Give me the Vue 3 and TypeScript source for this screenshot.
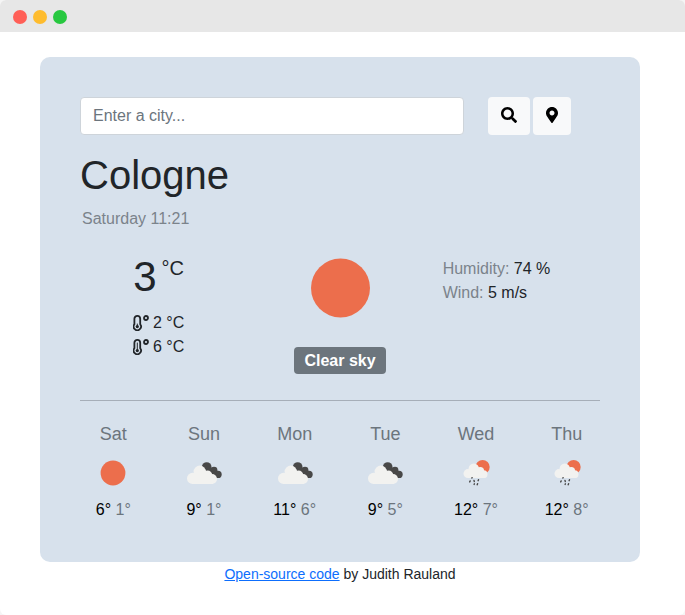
<script setup lang="ts">
import { ref } from 'vue'

type Icon = 'sun' | 'clouds' | 'rain'

interface Day {
  name: string
  icon: Icon
  max: number
  min: number
}

const city = ref('')

const days: Day[] = [
  { name: 'Sat', icon: 'sun', max: 6, min: 1 },
  { name: 'Sun', icon: 'clouds', max: 9, min: 1 },
  { name: 'Mon', icon: 'clouds', max: 11, min: 6 },
  { name: 'Tue', icon: 'clouds', max: 9, min: 5 },
  { name: 'Wed', icon: 'rain', max: 12, min: 7 },
  { name: 'Thu', icon: 'rain', max: 12, min: 8 },
]
</script>

<template>
  <div class="window">
    <header class="titlebar">
      <span class="dot close"></span>
      <span class="dot minimize"></span>
      <span class="dot expand"></span>
    </header>
    <div class="page">
      <main class="card">
        <form class="search" @submit.prevent>
          <input v-model="city" type="text" placeholder="Enter a city..." aria-label="City" autocomplete="off" />
          <div class="actions">
            <button type="submit" aria-label="Search">
              <svg class="glyph" viewBox="0 0 512 512" width="16" height="16"><path d="M505 442.7L405.3 343c-4.5-4.5-10.6-7-17-7H372c27.6-35.3 44-79.7 44-128C416 93.1 322.9 0 208 0S0 93.1 0 208s93.1 208 208 208c48.3 0 92.7-16.4 128-44v16.3c0 6.4 2.5 12.5 7 17l99.7 99.7c9.4 9.4 24.6 9.4 33.9 0l28.3-28.3c9.4-9.4 9.4-24.6.1-34zM208 336c-70.7 0-128-57.2-128-128 0-70.7 57.2-128 128-128 70.7 0 128 57.2 128 128 0 70.7-57.2 128-128 128z" /></svg>
            </button>
            <button type="button" aria-label="Use current location">
              <svg class="glyph" viewBox="0 0 384 512" width="12" height="16"><path d="M172.268 501.67C26.97 291.031 0 269.413 0 192 0 85.961 85.961 0 192 0s192 85.961 192 192c0 77.413-26.97 99.031-172.268 309.67-9.535 13.774-29.93 13.773-39.464 0zM192 272c44.183 0 80-35.817 80-80s-35.817-80-80-80-80 35.817-80 80 35.817 80 80 80z" /></svg>
            </button>
          </div>
        </form>

        <h1>Cologne</h1>
        <p class="date">Saturday 11:21</p>

        <section class="current">
          <div class="temperature">
            <div class="now"><span class="degrees">3</span><span class="unit">°C</span></div>
            <div class="range">
              <svg class="thermometer" viewBox="0 0 16 16" width="16" height="16" aria-hidden="true">
                <path d="M1.4 3.8a2.9 2.9 0 0 1 5.8 0v5.4a3.7 3.7 0 1 1-5.8 0z" stroke-width="1.8" />
                <circle cx="13" cy="3" r="2" stroke-width="1.8" />
                <circle class="bulb" cx="4.3" cy="11.6" r="1.6" />
                <path d="M4.3 9v2" stroke-width="1" />
              </svg>
              <span>2 °C</span>
            </div>
            <div class="range">
              <svg class="thermometer" viewBox="0 0 16 16" width="16" height="16" aria-hidden="true">
                <path d="M1.4 3.8a2.9 2.9 0 0 1 5.8 0v5.4a3.7 3.7 0 1 1-5.8 0z" stroke-width="1.8" />
                <circle cx="13" cy="3" r="2" stroke-width="1.8" />
                <circle class="bulb" cx="4.3" cy="11.6" r="1.6" />
                <path d="M4.3 4v7" stroke-width="1" />
              </svg>
              <span>6 °C</span>
            </div>
          </div>
          <div class="sky">
            <svg viewBox="0 0 100 100" width="100" height="100" aria-hidden="true"><circle cx="50.5" cy="50" r="29.5" fill="#ec6e4c" /></svg>
            <strong class="badge">Clear sky</strong>
          </div>
          <ul class="details">
            <li>Humidity: <span>74 %</span></li>
            <li>Wind: <span>5 m/s</span></li>
          </ul>
        </section>

        <hr />

        <section class="forecast">
          <div v-for="day in days" :key="day.name" class="day">
            <div class="name">{{ day.name }}</div>
            <svg viewBox="0 0 42 42" width="42" height="42" aria-hidden="true">
              <circle v-if="day.icon === 'sun'" cx="21" cy="21" r="12.4" fill="#ec6e4c" />
              <template v-else-if="day.icon === 'clouds'">
                <g fill="#484848">
                  <circle cx="23.7" cy="15" r="4.8" />
                  <circle cx="31" cy="18.2" r="3.4" />
                  <circle cx="35" cy="22.4" r="3.7" />
                  <path d="M24 19l4-4 7 11h-5z" />
                </g>
                <g fill="#f2f2f0">
                  <circle cx="9.6" cy="26.4" r="5.6" />
                  <circle cx="16.8" cy="19.8" r="6.2" />
                  <circle cx="24.6" cy="23.2" r="4.7" />
                  <circle cx="29" cy="27" r="5" />
                  <path d="M9 21h16l5 5v6H9z" />
                </g>
              </template>
              <template v-else>
                <circle cx="27.6" cy="15" r="7.1" fill="#ec6e4c" />
                <g fill="#f2f2f0">
                  <circle cx="13" cy="21.6" r="4.5" />
                  <circle cx="18.8" cy="16.6" r="5.2" />
                  <circle cx="25.2" cy="19" r="3.9" />
                  <circle cx="28.6" cy="22.2" r="3.9" />
                  <path d="M13 18h12l4 4v4.1H13z" />
                </g>
                <path d="M17.1 25.6l-.2.5M15.2 28.9l-.5 1M19 28.5l.3 1M23.5 27.7l-.4 1M19.4 31.8l-.3.6M22.6 31.6l-.4 1.2" fill="none" stroke="#484848" stroke-width="1.4" stroke-linecap="round" />
              </template>
            </svg>
            <div class="temps"><span class="max">{{ day.max }}°</span> <span class="min">{{ day.min }}°</span></div>
          </div>
        </section>
      </main>
      <footer><a href="#">Open-source code</a> by Judith Rauland</footer>
    </div>
  </div>
</template>

<style>
body {
  margin: 0;
  background: #f5f5f5;
}
</style>

<style scoped>
.window {
  box-sizing: border-box;
  min-height: 100vh;
  overflow: hidden;
  border-radius: 6px;
  background: #fff;
  color: #212529;
  font: 16px/24px "Liberation Sans", Arial, sans-serif;
}
.titlebar {
  display: flex;
  align-items: center;
  gap: 6px;
  height: 32px;
  padding: 2px 13px 0;
  box-sizing: border-box;
  background: #e7e7e7;
}
.dot {
  width: 14px;
  height: 14px;
  border-radius: 50%;
}
.close { background: #ff5f57; }
.minimize { background: #febc2e; }
.expand { background: #28c840; }
.page {
  padding: 25px 45px 0 40px;
}
.card {
  padding: 40px;
  border-radius: 10px;
  background: #d7e1ec;
}
.search {
  display: grid;
  grid-template-columns: minmax(0, 1fr) 112px;
  gap: 24px;
}
.search input {
  box-sizing: border-box;
  width: 100%;
  height: 38px;
  padding: 6px 12px;
  border: 1px solid #ced4da;
  border-radius: 4px;
  background: #fff;
  color: #212529;
  font: inherit;
}
.search input::placeholder {
  color: #6c757d;
  opacity: 1;
}
.actions {
  display: flex;
  gap: 3px;
}
.actions button {
  display: flex;
  align-items: center;
  height: 38px;
  padding: 0 13px 2px;
  border: 0;
  border-radius: 4px;
  background: #f8f9fa;
  color: #000;
  cursor: pointer;
}
.glyph {
  display: block;
  fill: currentColor;
}
.thermometer {
  display: block;
  fill: none;
  stroke: currentColor;
  stroke-linecap: round;
}
.bulb {
  fill: currentColor;
  stroke: none;
}
h1 {
  margin: 16px 0 8px;
  font-size: 40px;
  font-weight: 400;
  line-height: 48px;
}
.date {
  margin: 0;
  padding-left: 2px;
  color: #7b838b;
}
.current {
  display: grid;
  grid-template-columns: repeat(3, 1fr);
  margin: 7px -12px 0;
}
.temperature {
  display: flex;
  flex-direction: column;
  align-items: center;
  padding-top: 15px;
}
.now {
  display: flex;
  gap: 5px;
  margin-bottom: 10px;
}
.degrees {
  font-size: 42px;
  line-height: 48px;
}
.unit {
  font-size: 20px;
  line-height: 30px;
}
.range {
  display: flex;
  align-items: center;
  gap: 4px;
}
.sky {
  display: flex;
  flex-direction: column;
  align-items: center;
  gap: 9px;
}
.badge {
  padding: 2px 10px 1px;
  border-radius: 4px;
  background: #6c757d;
  color: #fff;
}
.details {
  margin: 0;
  padding: 19px 12px 0;
  list-style: none;
  color: #7b838b;
}
.details span {
  color: #212529;
}
hr {
  height: 1px;
  margin: 26px 0 21px;
  border: 0;
  background: #a6aeb8;
}
.forecast {
  display: grid;
  grid-template-columns: repeat(6, 1fr);
  margin: 0 -12px;
  text-align: center;
}
.name {
  color: #6c757d;
  font-size: 18px;
}
.day svg {
  display: block;
  margin: 6px auto 4px;
}
.max {
  color: #000;
}
.min {
  color: #6c757d;
}
footer {
  font-size: 14px;
  text-align: center;
}
footer a {
  color: #0d6efd;
}
</style>
